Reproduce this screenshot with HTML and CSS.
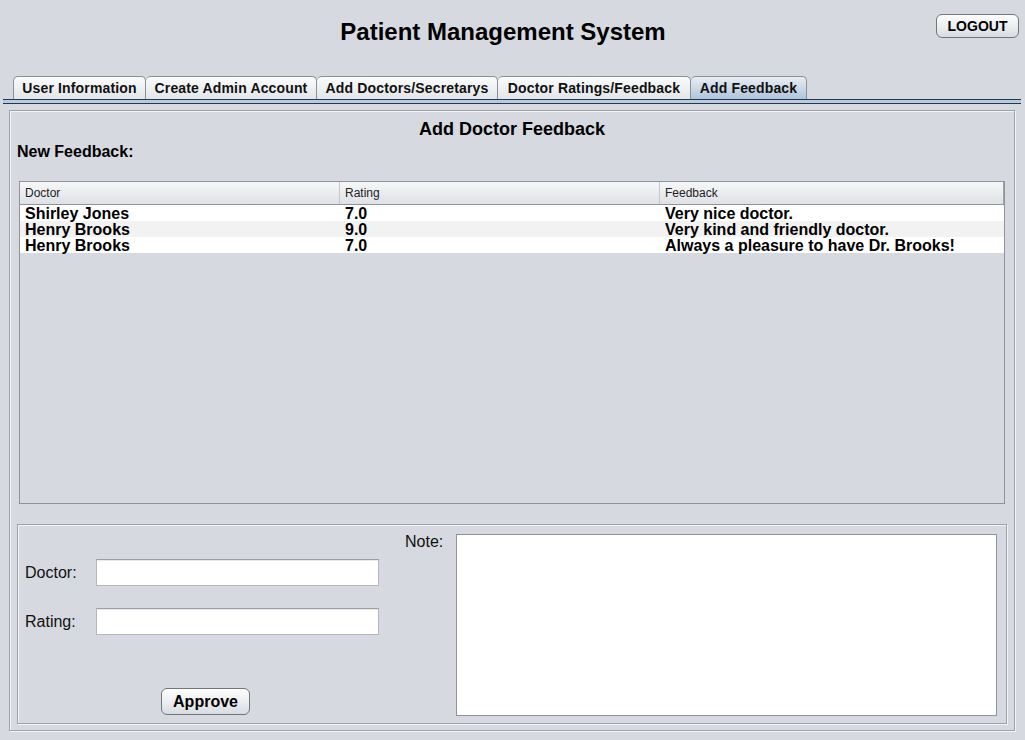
FILE: index.html
```html
<!DOCTYPE html>
<html>
<head>
<meta charset="utf-8">
<title>Patient Management System</title>
<link rel="stylesheet" href="styles.css">
</head>
<body>
<div class="app">
  <header class="top">
    <h1 class="title">Patient Management System</h1>
    <button class="btn logout">LOGOUT</button>
  </header>
  <nav class="tabs">
    <div class="tab">User Information</div>
    <div class="tab">Create Admin Account</div>
    <div class="tab">Add Doctors/Secretarys</div>
    <div class="tab">Doctor Ratings/Feedback</div>
    <div class="tab active">Add Feedback</div>
  </nav>
  <div class="tab-rule"></div>
  <main class="panel">
    <h2 class="panel-title">Add Doctor Feedback</h2>
    <div class="section-label">New Feedback:</div>
    <div class="table-pane">
      <div class="thead">
        <div class="th">Doctor</div>
        <div class="th">Rating</div>
        <div class="th last">Feedback</div>
      </div>
      <div class="tr">
        <div class="td">Shirley Jones</div>
        <div class="td">7.0</div>
        <div class="td">Very nice doctor.</div>
      </div>
      <div class="tr alt">
        <div class="td">Henry Brooks</div>
        <div class="td">9.0</div>
        <div class="td">Very kind and friendly doctor.</div>
      </div>
      <div class="tr">
        <div class="td">Henry Brooks</div>
        <div class="td">7.0</div>
        <div class="td">Always a pleasure to have Dr. Brooks!</div>
      </div>
    </div>
    <div class="form-pane">
      <div class="form-left">
        <div class="field-row">
          <span class="field-label">Doctor:</span>
          <div class="input"></div>
        </div>
        <div class="field-row">
          <span class="field-label">Rating:</span>
          <div class="input"></div>
        </div>
        <button class="btn approve">Approve</button>
      </div>
      <div class="note-label">Note:</div>
      <div class="textarea"></div>
    </div>
  </main>
</div>
</body>
</html>
```
FILE: styles.css
```css
* { box-sizing: border-box; }
html, body {
  margin: 0;
  padding: 0;
  background: #d6d9df;
}
body {
  width: 1025px;
  height: 740px;
  overflow: hidden;
  font-family: "Liberation Sans", Arial, sans-serif;
  color: #000;
}
.app {
  display: flex;
  flex-direction: column;
}
.top {
  display: grid;
  height: 76px;
}
.title {
  grid-area: 1 / 1;
  margin: 18px 19px 0 0;
  font-size: 24px;
  line-height: 28px;
  font-weight: bold;
  text-align: center;
  align-self: start;
}
.btn {
  font-family: "Liberation Sans", Arial, sans-serif;
  font-weight: bold;
  color: #000;
  border: 1px solid #6f767f;
  border-radius: 6px;
  background: linear-gradient(#fdfdfd, #eceef1 50%, #d8dbe0);
  padding: 0;
  box-shadow: inset 0 1px 0 #fff;
}
.logout {
  grid-area: 1 / 1;
  justify-self: end;
  align-self: start;
  margin: 14px 6px 0 0;
  width: 83px;
  height: 24px;
  font-size: 14px;
  line-height: 20px;
}
.tabs {
  display: grid;
  grid-template-columns: 133px 171px 181px 193px 116px;
  margin-left: 13px;
  height: 23px;
}
.tab {
  border: 1px solid #8c9096;
  border-bottom: none;
  border-left-width: 0;
  border-radius: 5px 5px 0 0;
  background: linear-gradient(#fafbfc, #eef0f2 50%, #e2e5e9);
  font-size: 14px;
  font-weight: bold;
  letter-spacing: 0.15px;
  line-height: 22px;
  text-align: center;
  white-space: nowrap;
  color: #111;
}
.tab:first-child { border-left-width: 1px; }
.tab.active {
  background: linear-gradient(#e9eef4, #c9d7e6 55%, #aec3da);
}
.tab-rule {
  margin: 0 4px 0 3px;
  height: 5px;
  border-top: 1px solid #27364a;
  border-bottom: 1px solid #27364a;
  background: #b9cbe0;
}
.panel {
  margin: 6px 0 0 9px;
  width: 1006px;
  height: 621px;
  border: 1px solid #9da1a8;
  box-shadow: 1px 1px 0 #f3f4f6, inset 1px 1px 0 #f3f4f6;
  padding: 8px 10px 0 7px;
  display: flex;
  flex-direction: column;
}
.panel-title {
  margin: 0;
  font-size: 18px;
  line-height: 20px;
  font-weight: bold;
  text-align: center;
  padding-left: 3px;
}
.section-label {
  margin-top: 4px;
  font-size: 16px;
  line-height: 18px;
  font-weight: bold;
}
.table-pane {
  margin: 20px 0 0 2px;
  width: 986px;
  height: 323px;
  border: 1px solid #8f949b;
  background: #d6d9df;
}
.thead {
  display: grid;
  grid-template-columns: 320px 320px 1fr;
  height: 23px;
  border-bottom: 1px solid #8f949b;
  background: linear-gradient(#f6f7f8, #eaecef 50%, #dee1e5);
}
.th {
  font-size: 12px;
  line-height: 22px;
  padding-left: 5px;
  color: #222;
  border-right: 1px solid #c3c7cd;
}
.th.last { border-right: 1px solid #9ea3aa; }
.tr {
  display: grid;
  grid-template-columns: 320px 320px 1fr;
  height: 16px;
  background: #fff;
}
.tr.alt { background: #f2f2f2; }
.td {
  font-size: 16px;
  line-height: 16px;
  font-weight: bold;
  padding: 1px 0 0 5px;
  white-space: nowrap;
}
.form-pane {
  margin-top: 20px;
  width: 990px;
  height: 200px;
  border: 1px solid #9da1a8;
  box-shadow: 1px 1px 0 #f3f4f6, inset 1px 1px 0 #f3f4f6;
  padding: 9px 9px 7px 7px;
  display: flex;
  align-items: flex-start;
}
.form-left {
  width: 380px;
  padding-top: 25px;
  display: flex;
  flex-direction: column;
}
.field-row {
  display: flex;
  align-items: center;
  height: 27px;
  margin-bottom: 22px;
}
.field-label {
  width: 71px;
  font-size: 16px;
  color: #111;
}
.input {
  width: 283px;
  height: 27px;
  background: #fff;
  border: 1px solid #b4b8be;
  border-top-color: #9a9ea5;
  box-shadow: inset 0 1px 0 #e9ebee;
}
.approve {
  margin: 31px 0 0 136px;
  width: 89px;
  height: 27px;
  font-size: 16px;
  line-height: 25px;
}
.note-label {
  width: 38px;
  margin: -1px 13px 0 0;
  font-size: 16px;
  line-height: 18px;
  color: #111;
}
.textarea {
  flex: 1;
  height: 182px;
  background: #fff;
  border: 1px solid #8f939b;
}
```
